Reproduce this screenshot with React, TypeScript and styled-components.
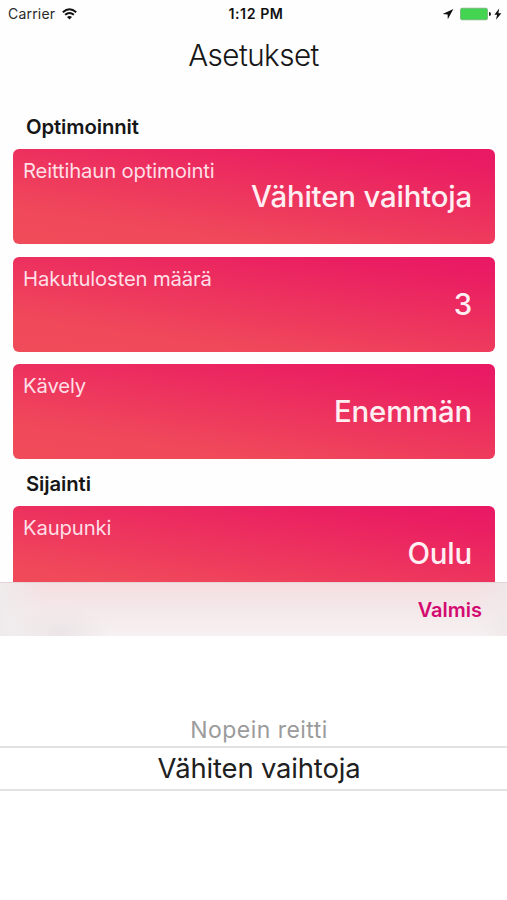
import React from "react";
import styled, { createGlobalStyle } from "styled-components";

const GlobalStyle = createGlobalStyle`
  * { box-sizing: border-box; }
  body { margin: 0; background: #fff; font-family: Inter, "Liberation Sans", sans-serif; }
`;

const Screen = styled.main`
  width: 507px;
  height: 900px;
  overflow: hidden;
  display: flex;
  flex-direction: column;
  background: #fefefe;
  color: #161616;
  white-space: nowrap;
`;

const StatusBar = styled.header`
  display: grid;
  grid-template-columns: 1fr auto 1fr;
  align-items: center;
  height: 27px;
  flex: none;
  padding: 0 5px 0 8px;
  font-size: 14px;
  color: #111;
`;

const Carrier = styled.div`
  display: flex;
  align-items: center;
  gap: 7px;
  color: #2a2a2a;
  letter-spacing: 0.2px;
`;

const Clock = styled.time`
  font-weight: 600;
  font-size: 14.2px;
  letter-spacing: 0.55px;
  padding-left: 2px;
`;

const Indicators = styled.div`
  display: flex;
  justify-content: flex-end;
  align-items: center;
`;

const Title = styled.h1`
  margin: 0;
  height: 83px;
  flex: none;
  padding-top: 8px;
  text-align: center;
  font-size: 29.6px;
  line-height: 40px;
  font-weight: 300;
  letter-spacing: -0.55px;
`;

const Settings = styled.section`
  height: 472px;
  flex: none;
  overflow: hidden;
`;

const SectionTitle = styled.h2<{ $top?: number }>`
  margin: 0;
  padding: ${(p) => p.$top ?? 0}px 0 0 26px;
  height: ${(p) => 39 + (p.$top ?? 0)}px;
  font-size: 20.3px;
  line-height: 33px;
  font-weight: 600;
  letter-spacing: -0.1px;
`;

const CardList = styled.div`
  display: flex;
  flex-direction: column;
  gap: 12.5px;
  padding: 0 12px 0 13px;
`;

const Card = styled.button`
  display: flex;
  flex-direction: column;
  height: 95px;
  width: 100%;
  border: 0;
  border-radius: 6px;
  padding: 8px 23px 0 10px;
  background: linear-gradient(188deg, #e91864 0%, #ea1e62 15%, #f04a5a 80%, #f04b59 100%);
  color: #fff;
  font-family: inherit;
  text-align: left;
`;

const CardLabel = styled.span`
  font-size: 20.3px;
  line-height: 28px;
  color: #ffdfe6;
  letter-spacing: -0.15px;
`;

const CardValue = styled.span`
  align-self: flex-end;
  margin-top: -7px;
  font-size: 29.4px;
  font-weight: 500;
  letter-spacing: -0.18px;
  line-height: 38px;
  color: #ffeef2;
`;

const Toolbar = styled.div`
  display: flex;
  justify-content: flex-end;
  align-items: center;
  flex: none;
  height: 54px;
  padding-right: 25px;
  border-top: 1px solid #e3d5d7;
  background:
    radial-gradient(ellipse 50px 30px at 60px 52px, rgba(228, 221, 223, 0.6), transparent),
    linear-gradient(90deg, #efebec 0, transparent 45px, transparent 475px, #efe9ea 515px),
    linear-gradient(#f5dee0, #f4e8ea 50%, #f6f1f2);
`;

const DoneButton = styled.button`
  border: 0;
  padding: 0;
  background: none;
  color: #d30b70;
  font: 600 20px/26px Inter, "Liberation Sans", sans-serif;
`;

const Picker = styled.div`
  flex: 1;
  padding-top: 78px;
  background: #fff;
  text-align: center;
`;

const PickerOption = styled.div<{ $selected?: boolean }>`
  height: ${(p) => (p.$selected ? 45 : 32)}px;
  border: solid #e2e2e2;
  border-width: ${(p) => (p.$selected ? "2px 0" : "0")};
  padding-left: 11px;
  color: ${(p) => (p.$selected ? "#202020" : "#9b9b9b")};
  font-size: ${(p) => (p.$selected ? 27.4 : 23)}px;
  line-height: ${(p) => (p.$selected ? 41 : 32)}px;
  letter-spacing: ${(p) => (p.$selected ? -0.15 : 0.45)}px;
`;

const WifiIcon = () => (
  <svg width="15" height="12" viewBox="0 0 15 12" fill="none" stroke="#111" strokeWidth="1.9">
    <path d="M.8 4.2Q7.5-1.7 14.2 4.2M3.1 6.8Q7.5 3 11.9 6.8" />
    <path d="M7.5 11.6 5 9.1q2.5-2 5 0z" fill="#111" stroke="none" />
  </svg>
);

const IndicatorIcons = () => (
  <svg width="60" height="14" viewBox="0 0 60 14">
    <path d="M11.4 2 .6 7.1l5 .4.2 4.8z" fill="#111" />
    <rect x="18.5" y="1.2" width="27" height="11.6" rx="1.5" fill="#43d551" stroke="#6fa875" strokeWidth=".7" />
    <path d="M47 5q2 0 2 2t-2 2z" fill="#222" />
    <path d="m57.2 1.4-4.8 6.4h2.7l-1.1 5 5.4-6.6h-3z" fill="#111" />
  </svg>
);

const SettingCard = ({ label, value }: { label: string; value: string }) => (
  <Card>
    <CardLabel>{label}</CardLabel>
    <CardValue>{value}</CardValue>
  </Card>
);

export default function App() {
  return (
    <>
      <GlobalStyle />
      <Screen>
        <StatusBar>
          <Carrier>Carrier <WifiIcon /></Carrier>
          <Clock>1:12 PM</Clock>
          <Indicators><IndicatorIcons /></Indicators>
        </StatusBar>
        <Title>Asetukset</Title>
        <Settings>
          <SectionTitle>Optimoinnit</SectionTitle>
          <CardList>
            <SettingCard label="Reittihaun optimointi" value="Vähiten vaihtoja" />
            <SettingCard label="Hakutulosten määrä" value="3" />
            <SettingCard label="Kävely" value="Enemmän" />
          </CardList>
          <SectionTitle $top={7.5}>Sijainti</SectionTitle>
          <CardList>
            <SettingCard label="Kaupunki" value="Oulu" />
          </CardList>
        </Settings>
        <Toolbar><DoneButton>Valmis</DoneButton></Toolbar>
        <Picker>
          <PickerOption>Nopein reitti</PickerOption>
          <PickerOption $selected>Vähiten vaihtoja</PickerOption>
        </Picker>
      </Screen>
    </>
  );
}
